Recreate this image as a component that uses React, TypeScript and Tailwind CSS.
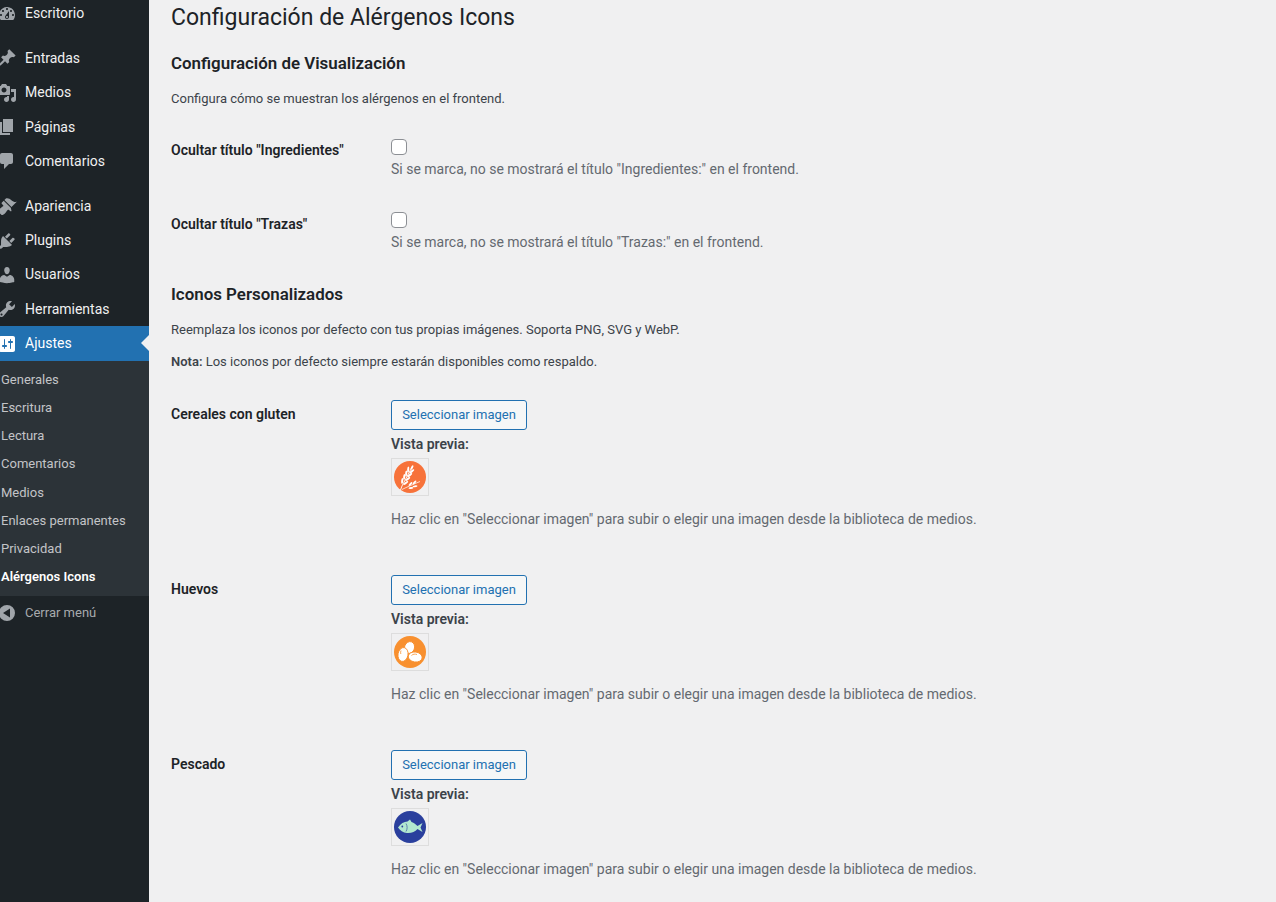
import React from "react";

const P = {
  dash: "M3.76 16h12.48c1.1-1.37 1.76-3.11 1.76-5 0-4.42-3.58-8-8-8s-8 3.58-8 8c0 1.89.66 3.63 1.76 5zM10 4c.55 0 1 .45 1 1s-.45 1-1 1-1-.45-1-1 .45-1 1-1zM6 6c.55 0 1 .45 1 1s-.45 1-1 1-1-.45-1-1 .45-1 1-1zm8 0c.55 0 1 .45 1 1s-.45 1-1 1-1-.45-1-1 .45-1 1-1zm-5.37 5.55L12 7v6c0 1.1-.9 2-2 2s-2-.9-2-2c0-.57.24-1.08.63-1.45zM4 10c.55 0 1 .45 1 1s-.45 1-1 1-1-.45-1-1 .45-1 1-1zm12 0c.55 0 1 .45 1 1s-.45 1-1 1-1-.45-1-1 .45-1 1-1zm-5 3c0-.55-.45-1-1-1s-1 .45-1 1 .45 1 1 1 1-.45 1-1z",
  post: "M10.44 3.02l1.82-1.82 6.36 6.35-1.83 1.82c-1.05-.68-2.48-.57-3.41.36l-.75.75c-.92.93-1.04 2.35-.35 3.41l-1.83 1.82-2.41-2.41-2.8 2.79c-.42.42-3.38 2.71-3.8 2.29s1.86-3.39 2.28-3.81l2.79-2.79L4.1 9.36l1.83-1.82c1.05.69 2.48.57 3.4-.36l.75-.75c.93-.92 1.05-2.35.36-3.41z",
  media: "M13 11V4c0-.55-.45-1-1-1h-1.67L9 1H5L3.67 3H2c-.55 0-1 .45-1 1v7c0 .55.45 1 1 1h10c.55 0 1-.45 1-1zM7 4.5c1.38 0 2.5 1.12 2.5 2.5S8.38 9.5 7 9.5 4.5 8.38 4.5 7 5.62 4.5 7 4.5zM14 6h5v10.5c0 1.38-1.12 2.5-2.5 2.5S14 17.88 14 16.5s1.12-2.5 2.5-2.5c.17 0 .34.02.5.05V9h-3V6zm-4 8.05V13h2v3.5c0 1.38-1.12 2.5-2.5 2.5S7 17.88 7 16.5 8.12 14 9.5 14c.17 0 .34.02.5.05z",
  page: "M6 15V2h10v13H6zm-1 1h8v2H3V5h2v11z",
  comment: "M5 2h9c1.1 0 2 .9 2 2v7c0 1.1-.9 2-2 2h-2l-5 5v-5H5c-1.1 0-2-.9-2-2V4c0-1.1.9-2 2-2z",
  appearance: "M14.48 11.06L7.41 3.99l1.5-1.5c.5-.56 2.3-.47 3.51.32 1.21.8 1.43 1.28 2.91 2.1 1.18.64 2.45 1.26 4.45.85zm-.71.71L6.7 4.7 4.93 6.47c-.39.39-.39 1.02 0 1.41l1.06 1.06c.39.39.39 1.03 0 1.42-.6.6-1.43 1.11-2.21 1.69-.35.26-.7.53-1.01.84C1.43 13.23.4 14.91 1.2 15.71l3.09 3.09c.8.8 2.48-.23 3.82-1.57.31-.31.58-.66.84-1.01.58-.78 1.09-1.61 1.69-2.21.39-.39 1.03-.39 1.42 0l1.06 1.06c.39.39 1.02.39 1.41 0z",
  plugin: "M13.11 4.36L9.87 7.6 8 5.73l3.24-3.24c.35-.34 1.05-.2 1.56.32.52.51.66 1.21.31 1.55zm-8 1.77l.91-1.12 9.01 9.01-1.19.84c-.71.71-2.63 1.16-3.82 1.16H6.14L4.9 17.26c-.59.59-1.54.59-2.12 0-.59-.58-.59-1.53 0-2.12l1.24-1.24v-3.88c0-1.13.4-3.19 1.09-3.89zm7.26 3.97l3.24-3.24c.34-.35 1.04-.21 1.55.31.52.51.66 1.21.31 1.55l-3.24 3.25z",
  users: "M10 9.25c-2.27 0-2.73-3.44-2.73-3.44C7 4.02 7.82 2 9.97 2c2.16 0 2.98 2.02 2.71 3.81 0 0-.41 3.44-2.68 3.44zm0 2.57L12.72 10c2.39 0 4.52 2.33 4.52 4.53v2.49s-3.65 1.13-7.24 1.13c-3.65 0-7.24-1.13-7.24-1.13v-2.49c0-2.25 1.94-4.48 4.47-4.48z",
  tools: "M16.68 9.77c-1.34 1.34-3.3 1.67-4.95.99l-5.41 6.52c-.99.99-2.59.99-3.58 0s-.99-2.59 0-3.57l6.52-5.42c-.68-1.65-.35-3.61.99-4.95 1.28-1.28 3.12-1.62 4.72-1.06l-2.89 2.89 2.82 2.82 2.86-2.87c.53 1.58.18 3.39-1.08 4.65zM3.81 16.21c.4.39 1.04.39 1.43 0 .4-.4.4-1.04 0-1.43-.39-.4-1.03-.4-1.43 0-.39.39-.39 1.03 0 1.43z",
  settings: "M18 16V4c0-1.1-.9-2-2-2H4c-1.1 0-2 .9-2 2v12c0 1.1.9 2 2 2h12c1.1 0 2-.9 2-2zM8 11h1c.55 0 1 .45 1 1s-.45 1-1 1H8v1.5c0 .28-.22.5-.5.5s-.5-.22-.5-.5V13H6c-.55 0-1-.45-1-1s.45-1 1-1h1V5.500c0-.28.22-.5.5-.5s.5.22.5.5V11zm5-2h-1c-.55 0-1-.45-1-1s.45-1 1-1h1V5.500c0-.28.22-.5.5-.5s.5.22.5.5V7h1c.55 0 1 .45 1 1s-.45 1-1 1h-1v5.500c0 .28-.22.5-.5.5s-.5-.22-.5-.5V9z",
  collapse: "M10 2a8 8 0 1 0 0 16 8 8 0 0 0 0-16zm3 3.5v9L6 10z",
};

function MenuIcon({ d, active }: { d: string; active?: boolean }) {
  return (
    <svg viewBox="0 0 20 20" className={`w-5 h-5 shrink-0 -ml-[3px] ${active ? "text-white" : "text-[#a0a5aa]"}`} fill="currentColor" fillRule="evenodd">
      <path d={d} />
    </svg>
  );
}

function MenuItem({ d, label, sep }: { d: string; label: string; sep?: string }) {
  return (
    <div className={`flex items-center h-[34.4px] text-[14px] text-[#f0f0f1] ${sep ?? ""}`}>
      <MenuIcon d={d} />
      <span className="ml-2">{label}</span>
    </div>
  );
}

const subs = ["Generales", "Escritura", "Lectura", "Comentarios", "Medios", "Enlaces permanentes", "Privacidad"];

function Sidebar() {
  return (
    <aside className="w-[149px] shrink-0 bg-[#1d2327] overflow-hidden h-[902px]">
      <div className="-mt-[3.7px]">
        <MenuItem d={P.dash} label="Escritorio" />
        <MenuItem d={P.post} label="Entradas" sep="mt-[10.4px]" />
        <MenuItem d={P.media} label="Medios" />
        <MenuItem d={P.page} label="Páginas" />
        <MenuItem d={P.comment} label="Comentarios" />
        <MenuItem d={P.appearance} label="Apariencia" sep="mt-[10.3px]" />
        <MenuItem d={P.plugin} label="Plugins" />
        <MenuItem d={P.users} label="Usuarios" />
        <MenuItem d={P.tools} label="Herramientas" />
        <div className="relative flex items-center h-[34.4px] -mt-[0.2px] bg-[#2271b1] text-[14px] text-white">
          <MenuIcon d={P.settings} active />
          <span className="ml-2">Ajustes</span>
          <div className="absolute right-0 top-[9px] w-0 h-0 border-y-[8px] border-y-transparent border-r-[8px] border-r-[#f0f0f1]" />
        </div>
        <div className="bg-[#2c3338] pt-[4.9px] pb-[5.3px]">
          {subs.map((s) => (
            <div key={s} className="h-[28.17px] flex items-center pl-[1px] text-[13px] text-[#c3c4c7]">{s}</div>
          ))}
          <div className="h-[28.17px] flex items-center pl-[1px] text-[13px] font-semibold text-white">Alérgenos Icons</div>
        </div>
        <div className="flex items-center h-[34px] text-[13px] text-[#a7aaad]">
          <MenuIcon d={P.collapse} />
          <span className="ml-2">Cerrar menú</span>
        </div>
      </div>
    </aside>
  );
}

function Leaf({ x, y, r, rx = 1.05, ry = 3 }: { x: number; y: number; r: number; rx?: number; ry?: number }) {
  return <ellipse cx={x} cy={y} rx={rx} ry={ry} transform={`rotate(${r} ${x} ${y})`} />;
}

function Wheat() {
  return (
    <svg viewBox="0 0 32 32" className="w-8 h-8 block">
      <circle cx="16" cy="16" r="16" fill="#f7723a" />
      <g fill="#fff">
        <path d="M6.500 29 L8 25 L18 6" stroke="#fff" strokeWidth="0.900" fill="none" />
        <path d="M8 28.500 C13 26 19 23.500 26 20.500" stroke="#fff" strokeWidth="0.700" fill="none" />
        <Leaf x={8.200} y={20} r={5} />
        <Leaf x={10.200} y={16} r={5} />
        <Leaf x={12.200} y={12.400} r={5} />
        <Leaf x={14.200} y={8.600} r={5} />
        <Leaf x={11.800} y={22} r={52} />
        <Leaf x={13.800} y={18} r={52} />
        <Leaf x={15.800} y={14.200} r={52} />
        <Leaf x={17.800} y={10.400} r={52} />
        <Leaf x={18} y={6.500} r={27} rx={1} ry={2.400} />
        <Leaf x={16.500} y={23} r={45} rx={0.900} ry={2.500} />
        <Leaf x={20.500} y={21.500} r={45} rx={0.900} ry={2.500} />
        <Leaf x={17} y={27} r={85} rx={0.900} ry={2.500} />
        <Leaf x={21} y={25.300} r={85} rx={0.900} ry={2.500} />
      </g>
    </svg>
  );
}

function Eggs() {
  return (
    <svg viewBox="0 0 32 32" className="w-8 h-8 block">
      <circle cx="16" cy="16" r="16" fill="#f8902f" />
      <g fill="#fff" stroke="#f8902f" strokeWidth="0.900">
        <ellipse cx="15.500" cy="11.500" rx="5" ry="6" transform="rotate(20 15.500 11.500)" />
        <ellipse cx="9" cy="18.500" rx="5" ry="7" transform="rotate(10 9 18.500)" />
        <ellipse cx="21.200" cy="21" rx="7" ry="5" transform="rotate(8 21.200 21)" />
      </g>
      <path d="M17.500 19.500 C19 18 21 17.800 23 18.500" fill="none" stroke="#f8902f" strokeWidth="0.800" />
      <path d="M7 14.500 C6.500 15.500 6.500 17 6.800 18" fill="none" stroke="#f8902f" strokeWidth="0.800" />
    </svg>
  );
}

function Fish() {
  return (
    <svg viewBox="0 0 32 32" className="w-8 h-8 block">
      <circle cx="16" cy="16" r="16" fill="#2a3f9d" />
      <path d="M4 16.500 C6.500 12.500 10 10.500 13.500 10.500 L16 8.500 L17.500 11 C20 12 22 13.500 23.500 15 L28.500 12 L26.500 16.500 L28.500 21 L23.500 18 C21 20.800 17 22.500 13 22 C9 21.700 6 19.500 4 16.500Z" fill="#b2e8cf" />
      <circle cx="8.300" cy="15.500" r="0.900" fill="#2a3f9d" />
      <path d="M12 12.500 C13.500 15 13.500 18 12 20.500" fill="none" stroke="#2a3f9d" strokeWidth="0.600" />
    </svg>
  );
}

function IconRow({ label, children, first }: { label: string; children: React.ReactNode; first?: boolean }) {
  return (
    <div className={`flex ${first ? "mt-[28px]" : "mt-[46px]"}`}>
      <div className="w-[220px] shrink-0 pt-1 text-[14px] leading-5 font-semibold text-[#1d2327]">{label}</div>
      <div>
        <button className="h-[30px] w-[136px] rounded-[3px] border border-[#2271b1] bg-[#f6f7f7] text-[13px] text-[#2271b1] block">Seleccionar imagen</button>
        <div className="mt-[4px] text-[14px] leading-5 font-semibold text-[#3c434a]">Vista previa:</div>
        <div className="mt-[4px] w-[38px] h-[38px] border border-[#dddddd] p-[2px]">{children}</div>
        <p className="mt-[13px] text-[14px] leading-5 text-[#646970]">Haz clic en "Seleccionar imagen" para subir o elegir una imagen desde la biblioteca de medios.</p>
      </div>
    </div>
  );
}

function CheckRow({ label, desc, className, labelClass }: { label: string; desc: string; className: string; labelClass: string }) {
  return (
    <div className={`flex ${className}`}>
      <div className={`w-[220px] shrink-0 text-[14px] leading-5 font-semibold text-[#1d2327] ${labelClass}`}>{label}</div>
      <div>
        <div className="h-5">
          <div className="w-4 h-4 rounded-[4px] border border-[#8c8f94] bg-white" />
        </div>
        <p className="text-[14px] leading-5 text-[#646970]">{desc}</p>
      </div>
    </div>
  );
}

export default function App() {
  return (
    <div className="flex h-[902px] overflow-hidden bg-[#f0f0f1] font-['Roboto',sans-serif]">
      <Sidebar />
      <main className="pl-[22px] flex-1">
        <h1 className="mt-[3px] h-[29px] text-[23px] leading-[29px] font-normal text-[#1d2327]">Configuración de Alérgenos Icons</h1>
        <h2 className="mt-[20px] text-[16.9px] leading-[22px] font-semibold text-[#1d2327]">Configuración de Visualización</h2>
        <p className="mt-[15px] text-[13px] leading-5 text-[#3c434a]">Configura cómo se muestran los alérgenos en el frontend.</p>
        <CheckRow className="mt-[30px] h-[73px]" labelClass="pt-px" label={'Ocultar título "Ingredientes"'} desc={'Si se marca, no se mostrará el título "Ingredientes:" en el frontend.'} />
        <CheckRow className="h-[52px]" labelClass="pt-[2px]" label={'Ocultar título "Trazas"'} desc={'Si se marca, no se mostrará el título "Trazas:" en el frontend.'} />
        <h2 className="mt-[19px] text-[16.9px] leading-[22px] font-semibold text-[#1d2327]">Iconos Personalizados</h2>
        <p className="mt-[15px] text-[13px] leading-5 text-[#3c434a]">Reemplaza los iconos por defecto con tus propias imágenes. Soporta PNG, SVG y WebP.</p>
        <p className="mt-[12px] text-[13px] leading-5 text-[#3c434a]"><strong className="font-semibold">Nota:</strong> Los iconos por defecto siempre estarán disponibles como respaldo.</p>
        <IconRow first label="Cereales con gluten"><Wheat /></IconRow>
        <IconRow label="Huevos"><Eggs /></IconRow>
        <IconRow label="Pescado"><Fish /></IconRow>
      </main>
    </div>
  );
}
